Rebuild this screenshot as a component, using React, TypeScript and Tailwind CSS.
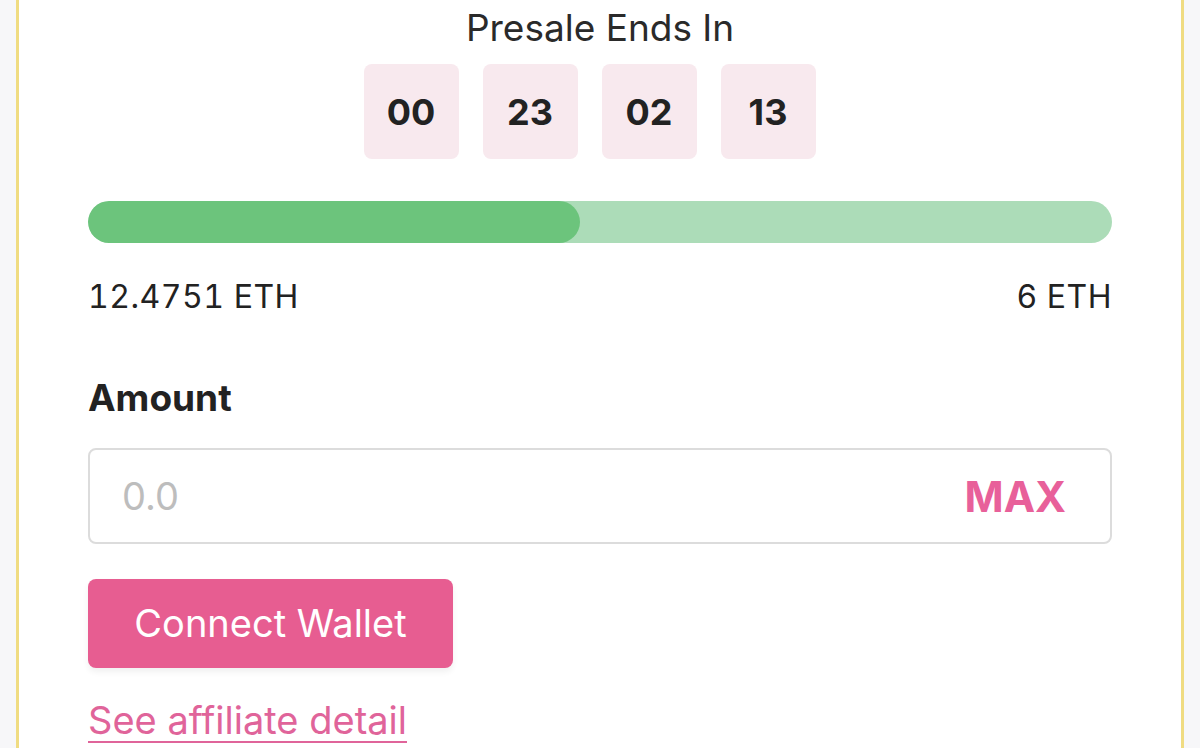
import { useState } from "react";

const units = ["00", "23", "02", "13"];

export default function App() {
  const [amount, setAmount] = useState("");

  return (
    <div className="min-h-[748px] bg-[#f7f7f9] px-4 font-['Inter',sans-serif] text-[#222]">
      <div className="min-h-[748px] border-x-[3px] border-[#f0dc82] bg-white px-[69px] pt-[6px]">
        <h2 className="text-center text-[37px] leading-[44px] text-[#2a2a2a]">Presale Ends In</h2>

        <div className="mt-[14px] flex justify-center pl-[3px]">
          {units.map((u) => (
            <div
              key={u}
              className="mr-6 flex h-[95px] w-[95px] items-center justify-center rounded-lg bg-[#f8e9ee] text-[36px] font-bold text-[#222]"
            >
              {u}
            </div>
          ))}
        </div>

        <div className="mt-[42px] h-[42px] w-full overflow-hidden rounded-full bg-[#acdcb8]">
          <div className="h-full w-[48%] rounded-full bg-[#6cc47c]" />
        </div>

        <div className="mt-[34px] flex justify-between text-[32px] leading-[40px] tracking-[0.5px] text-[#222] tabular-nums">
          <span>12.4751 ETH</span>
          <span>6 ETH</span>
        </div>

        <label className="mt-[59px] block text-[37px] font-bold leading-[44px] text-[#222]">Amount</label>

        <div className="mt-[28px] flex h-[96px] items-center rounded-lg border-2 border-[#dcdcdc] pl-[32px] pr-[44px]">
          <input
            value={amount}
            onChange={(e) => setAmount(e.target.value)}
            placeholder="0.0"
            className="min-w-0 flex-1 bg-transparent text-[38px] text-[#222] outline-none placeholder:text-[#bdbdbd]"
          />
          <button className="text-[42px] font-bold text-[#e8609a]">MAX</button>
        </div>

        <button className="mt-[35px] flex h-[89px] w-[365px] items-center justify-center rounded-lg bg-[#e75d91] text-[38px] text-white shadow-[0_4px_6px_rgba(0,0,0,0.06)]">
          Connect Wallet
        </button>

        <a
          href="#"
          className="mt-[30px] block w-fit text-[38px] leading-[44px] text-[#e0649a] underline decoration-2 underline-offset-[7px]"
        >
          See affiliate detail
        </a>
      </div>
    </div>
  );
}
